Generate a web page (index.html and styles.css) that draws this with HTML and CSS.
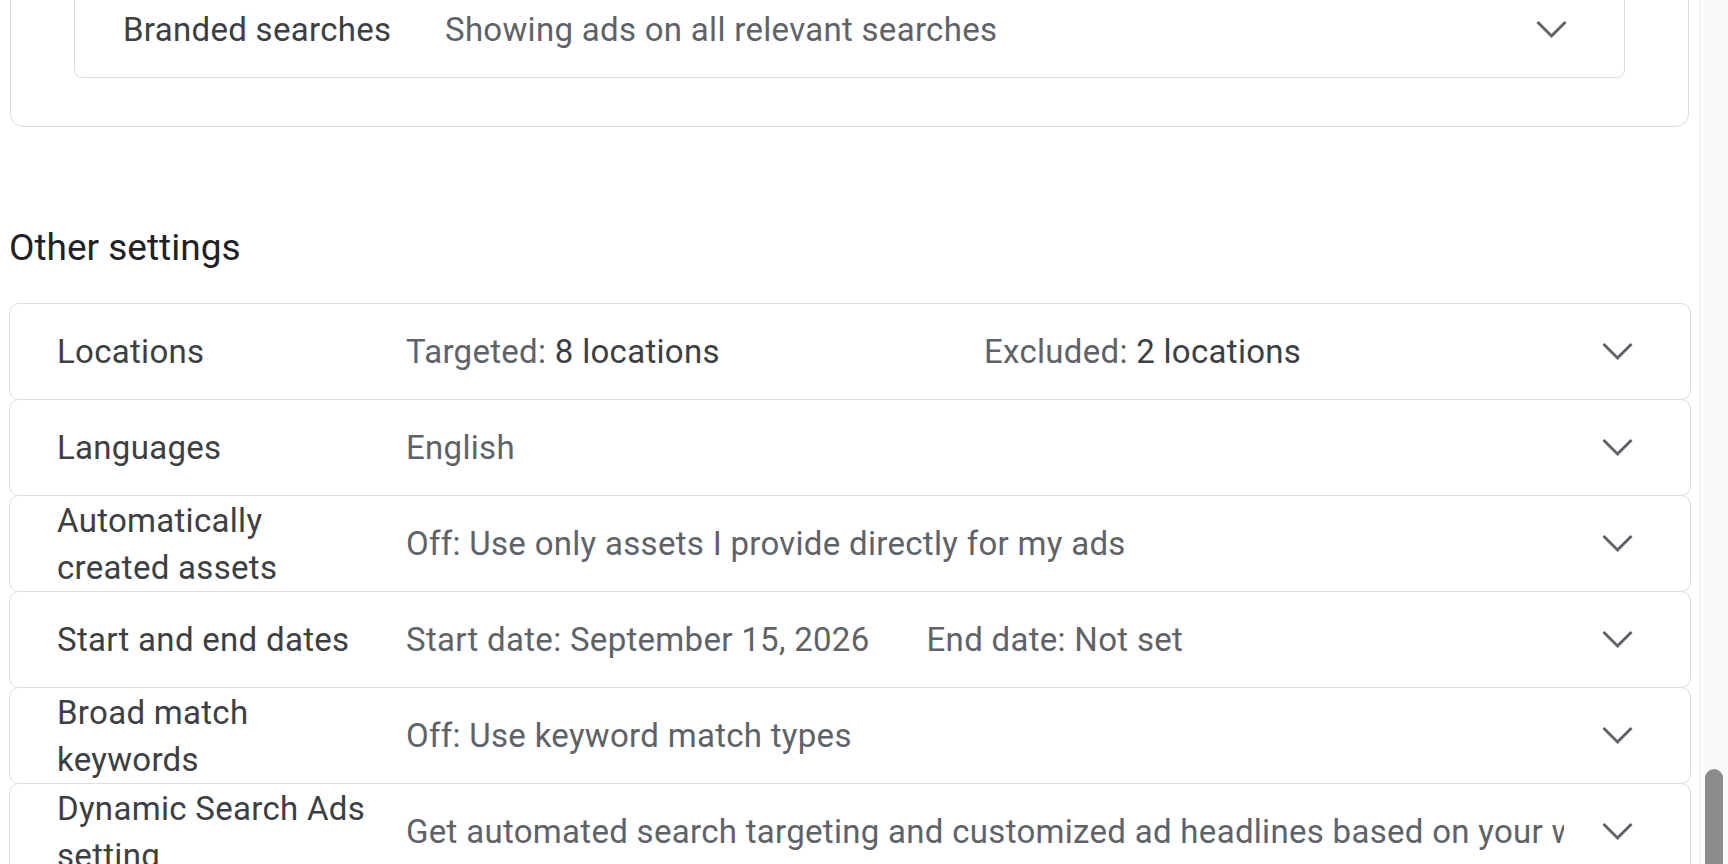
FILE: index.html
```html
<!DOCTYPE html>
<html lang="en">
<head>
<meta charset="utf-8">
<title>Campaign settings</title>
<link rel="stylesheet" href="styles.css">
</head>
<body>
<div class="scrollbar"><div class="thumb"></div></div>
<main class="page">
  <section class="card-outer">
    <div class="card-inner">
      <div class="row-inner">
        <div class="label label-inner">Branded searches</div>
        <div class="value">Showing ads on all relevant searches</div>
        <svg class="chev" viewBox="0 0 31 19"><polyline points="1.5,2 15.5,16 29.5,2"/></svg>
      </div>
    </div>
  </section>

  <h2 class="title">Other settings</h2>

  <div class="rows">
    <div class="row">
      <div class="label">Locations</div>
      <div class="value"><span class="loc-part">Targeted: <span class="strong">8 locations</span></span><span>Excluded: <span class="strong">2 locations</span></span></div>
      <svg class="chev" viewBox="0 0 31 19"><polyline points="1.5,2 15.5,16 29.5,2"/></svg>
    </div>
    <div class="row">
      <div class="label">Languages</div>
      <div class="value">English</div>
      <svg class="chev" viewBox="0 0 31 19"><polyline points="1.5,2 15.5,16 29.5,2"/></svg>
    </div>
    <div class="row">
      <div class="label">Automatically created assets</div>
      <div class="value">Off: Use only assets I provide directly for my ads</div>
      <svg class="chev" viewBox="0 0 31 19"><polyline points="1.5,2 15.5,16 29.5,2"/></svg>
    </div>
    <div class="row">
      <div class="label">Start and end dates</div>
      <div class="value"><span class="date-part">Start date: September 15, 2026</span><span>End date: Not set</span></div>
      <svg class="chev" viewBox="0 0 31 19"><polyline points="1.5,2 15.5,16 29.5,2"/></svg>
    </div>
    <div class="row">
      <div class="label">Broad match keywords</div>
      <div class="value">Off: Use keyword match types</div>
      <svg class="chev" viewBox="0 0 31 19"><polyline points="1.5,2 15.5,16 29.5,2"/></svg>
    </div>
    <div class="row">
      <div class="label">Dynamic Search Ads setting</div>
      <div class="value">Get automated search targeting and customized ad headlines based on your website</div>
      <svg class="chev" viewBox="0 0 31 19"><polyline points="1.5,2 15.5,16 29.5,2"/></svg>
    </div>
  </div>
</main>
</body>
</html>
```

FILE: styles.css
```css
html {
  overflow: hidden;
  background: #ffffff;
}

body {
  margin: 0;
  font-family: Roboto, "Noto Sans", Arial, sans-serif;
  color: #3c4043;
  background: #ffffff;
}

.page {
  width: 1682px;
  padding-left: 9px;
}

.card-outer {
  margin: -45px 2px 0 1px;
  padding: 24px 63px 48px 63px;
  border: 1px solid #dadce0;
  border-radius: 13px;
}

.card-inner {
  border: 1px solid #dadce0;
  border-radius: 8px;
}

.row-inner {
  display: flex;
  align-items: center;
  height: 96px;
  padding: 0 57px 0 48px;
}

.label {
  flex: 0 0 316px;
  margin-right: 33px;
  font-size: 33px;
  letter-spacing: 0.3px;
  line-height: 47px;
  color: #3c4043;
}

.label-inner {
  margin-right: 6px;
}

.value {
  flex: 1 1 auto;
  min-width: 0;
  display: flex;
  overflow: hidden;
  white-space: nowrap;
  font-size: 33px;
  letter-spacing: 0.3px;
  line-height: 47px;
  color: #5f6368;
}

.strong {
  color: #3c4043;
}

.loc-part {
  flex: 0 0 578px;
}

.date-part {
  margin-right: 57px;
}

.chev {
  flex: 0 0 31px;
  width: 31px;
  height: 19px;
  margin-left: 38px;
  fill: none;
  stroke: #5f6368;
  stroke-width: 3;
}

.title {
  margin: 97px 0 31px 0;
  font-size: 37px;
  line-height: 48px;
  font-weight: 400;
  color: #202124;
}

.rows {
  display: flex;
  flex-direction: column;
}

.row {
  display: flex;
  align-items: center;
  box-sizing: border-box;
  height: 97px;
  padding: 0 57px 0 47px;
  border: 1px solid #dadce0;
  border-radius: 10px;
  background: #ffffff;
}

.row + .row {
  margin-top: -1px;
}

.scrollbar {
  position: fixed;
  top: 0;
  right: 0;
  width: 28px;
  height: 100%;
  background: #fafafa;
  border-left: 1px solid #f0f0f0;
}

.thumb {
  position: absolute;
  top: 769px;
  left: 5px;
  width: 18px;
  height: 200px;
  border-radius: 9px;
  background: #8c8c8c;
}
```
